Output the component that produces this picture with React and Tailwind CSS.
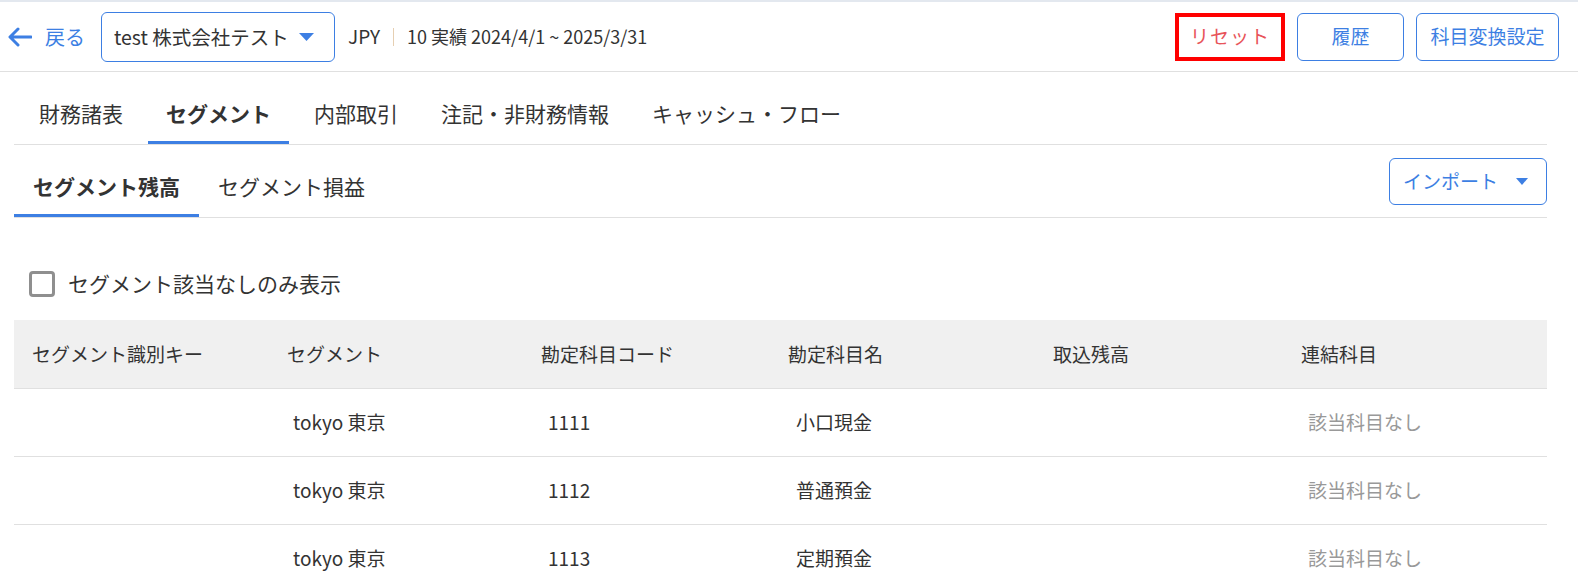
import { useState } from 'react'

const blue = '#3d7fe3'

const mainTabs = ['財務諸表', 'セグメント', '内部取引', '注記・非財務情報', 'キャッシュ・フロー']
const subTabs = ['セグメント残高', 'セグメント損益']
const columns = ['セグメント識別キー', 'セグメント', '勘定科目コード', '勘定科目名', '取込残高', '連結科目']
const rows = [
  { key: '', segment: 'tokyo 東京', code: '1111', name: '小口現金', balance: '', linked: '' },
  { key: '', segment: 'tokyo 東京', code: '1112', name: '普通預金', balance: '', linked: '' },
  { key: '', segment: 'tokyo 東京', code: '1113', name: '定期預金', balance: '', linked: '' },
]

const gridCols = 'grid grid-cols-[255px_254px_247px_265px_248px_1fr]'

function Caret({ w = 15, h = 8 }) {
  return (
    <svg width={w} height={h} viewBox={`0 0 ${w} ${h}`}>
      <polygon points={`0,0 ${w},0 ${w / 2},${h}`} fill={blue} />
    </svg>
  )
}

export default function App() {
  const [mainTab, setMainTab] = useState(1)
  const [subTab, setSubTab] = useState(0)
  const [onlyUnmatched, setOnlyUnmatched] = useState(false)

  return (
    <div className="min-h-[586px] bg-white font-['Noto_Sans_CJK_JP','Noto_Sans',sans-serif] text-[#333]">
      {/* header */}
      <header className="flex h-[72px] items-center border-t-2 border-b border-t-[#e3e8ef] border-b-[#e0e0e0] pl-[8px] pr-[19px]">
        <button className="flex items-center gap-[13px] text-[20px] text-[#3d7fe3]">
          <svg width="24" height="20" viewBox="0 0 24 20" fill="none">
            <path d="M10 2 L2 10 L10 18 M2.5 10 H23" stroke={blue} strokeWidth="3" strokeLinecap="round" strokeLinejoin="round" />
          </svg>
          戻る
        </button>
        <div className="ml-[16px] flex h-[50px] w-[234px] items-center justify-between rounded-[6px] border border-[#3d7fe3] pl-[12px] pr-[20px] text-[19.5px]">
          <span>test 株式会社テスト</span>
          <Caret />
        </div>
        <div className="ml-[13px] flex items-center text-[18px]">
          <span className="text-[19px]">JPY</span>
          <span className="mx-[13px] h-[18px] w-px bg-[#e6cfb2]" />
          <span>10 実績 2024/4/1 ~ 2025/3/31</span>
        </div>
        <div className="ml-auto flex items-center gap-[12px] text-[19px]">
          <button className="flex h-[48px] w-[110px] items-center justify-center border-4 border-[#ff0000] tracking-[1px] text-[#e8545a]">
            リセット
          </button>
          <button className="h-[48px] w-[107px] rounded-[6px] border border-[#3d7fe3] text-[#3d7fe3]">履歴</button>
          <button className="h-[48px] w-[143px] rounded-[6px] border border-[#3d7fe3] text-[#3d7fe3]">科目変換設定</button>
        </div>
      </header>

      <div className="ml-[14px] mr-[31px]">
        {/* main tabs */}
        <div className="flex gap-[7px] border-b border-[#e0e0e0] pl-[7px] pt-[14px]">
          {mainTabs.map((t, i) => (
            <button
              key={t}
              onClick={() => setMainTab(i)}
              className={
                'h-[58px] border-b-[3px] px-[18px] text-[21px] ' +
                (i === mainTab ? 'border-[#3d7fe3] font-bold' : 'border-transparent')
              }
            >
              {t}
            </button>
          ))}
        </div>

        {/* sub tabs */}
        <div className="flex h-[73px] items-center border-b border-[#e0e0e0]">
          {subTabs.map((t, i) => (
            <button
              key={t}
              onClick={() => setSubTab(i)}
              className={
                'flex h-full items-center border-b-[3px] px-[19px] pt-[15px] text-[21px] ' +
                (i === subTab ? 'border-[#3d7fe3] font-bold' : 'border-transparent')
              }
            >
              {t}
            </button>
          ))}
          <button className="ml-auto flex h-[47px] w-[158px] items-center gap-[18px] rounded-[6px] border border-[#3d7fe3] pl-[13px] text-[19px] text-[#3d7fe3]">
            インポート
            <Caret w={12} h={7} />
          </button>
        </div>

        {/* filter */}
        <label className="mt-[46px] flex h-[40px] cursor-pointer items-center gap-[13px] pl-[15px] text-[21px]">
          <span
            onClick={() => setOnlyUnmatched(!onlyUnmatched)}
            className={
              'h-[26px] w-[26px] rounded-[4px] border-[3px] ' +
              (onlyUnmatched ? 'border-[#3d7fe3] bg-[#3d7fe3]' : 'border-[#8f8f8f] bg-white')
            }
          />
          セグメント該当なしのみ表示
        </label>

        {/* table */}
        <div className="mt-[16px] text-[19px]">
          <div className={gridCols + ' h-[69px] items-center border-b border-[#e0e0e0] bg-[#f0f0f0]'}>
            {columns.map((c) => (
              <div key={c} className="pl-[18px]">
                {c}
              </div>
            ))}
          </div>
          {rows.map((r) => (
            <div key={r.code} className={gridCols + ' h-[68px] items-center border-b border-[#e0e0e0]'}>
              <div className="pl-[25px]">{r.key}</div>
              <div className="pl-[24px]">{r.segment}</div>
              <div className="pl-[25px]">{r.code}</div>
              <div className="pl-[26px]">{r.name}</div>
              <div className="pl-[25px]">{r.balance}</div>
              <div className="pl-[25px] text-[#999]">{r.linked || '該当科目なし'}</div>
            </div>
          ))}
        </div>
      </div>
    </div>
  )
}
